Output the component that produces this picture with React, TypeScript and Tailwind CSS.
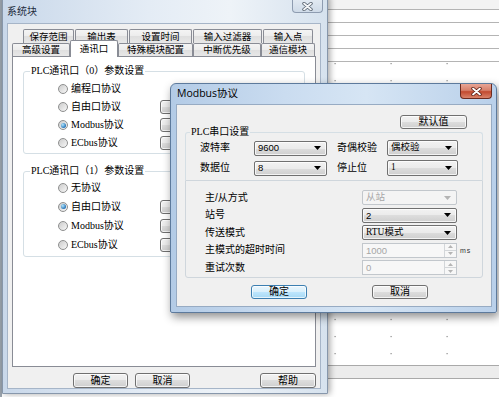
import type { ReactNode } from "react";

const face = "font-['Liberation_Sans','Noto_Sans_CJK_SC',sans-serif]";
const serif = "font-['Liberation_Serif','Noto_Sans_CJK_SC',serif]";
const btnSkin =
  "border-[#707070] bg-[linear-gradient(#f2f2f2,#ebebeb_50%,#dddddd_50%,#cfcfcf)] shadow-[inset_0_0_0_1px_rgba(255,255,255,0.75)]";

function Btn({
  children,
  className = "",
  primary = false,
}: {
  children?: ReactNode;
  className?: string;
  primary?: boolean;
}) {
  const skin = primary
    ? "border-[#3c7fb1] bg-[linear-gradient(#eaf6fd,#d9f0fc_50%,#bee6fd_50%,#a7d9f5)] shadow-[inset_0_0_0_1px_rgba(255,255,255,0.7)]"
    : btnSkin;
  return (
    <div
      className={`flex shrink-0 items-center justify-center rounded-[3px] border text-[10px] leading-none text-black ${skin} ${className}`}
    >
      {children}
    </div>
  );
}

function Radio({ on = false }: { on?: boolean }) {
  return (
    <span className="flex h-[10px] w-[10px] shrink-0 items-center justify-center rounded-full border border-[#8e8f8f] bg-[linear-gradient(135deg,#cbcbcb,#f7f7f7)]">
      {on && (
        <span className="h-[5px] w-[5px] rounded-full bg-[radial-gradient(circle_at_35%_35%,#b4e8ff,#1d6cb2_75%)]" />
      )}
    </span>
  );
}

function Arrow({ grey = false }: { grey?: boolean }) {
  return (
    <svg width="7" height="4" viewBox="0 0 7 4" className="shrink-0">
      <path d="M0 0h7L3.5 4z" fill={grey ? "#b4b4b4" : "#000"} />
    </svg>
  );
}

function Combo({
  value,
  className = "",
  disabled = false,
  latin = false,
}: {
  value: string;
  className?: string;
  disabled?: boolean;
  latin?: boolean;
}) {
  const skin = disabled
    ? "border-[#c2c7cc] bg-[#f4f4f4] text-[#a6a6a6]"
    : `${btnSkin} text-black`;
  return (
    <div
      className={`flex h-[15px] shrink-0 items-center justify-between rounded-[2px] border pl-[3px] pr-[5px] text-[9.5px] leading-none ${skin} ${
        latin ? face : serif
      } ${className}`}
    >
      <span>{value}</span>
      <Arrow grey={disabled} />
    </div>
  );
}

function Spin({ value }: { value: string }) {
  return (
    <div className="flex h-[15px] w-[95px] shrink-0 items-stretch border border-[#c2c7cc] bg-[#f7f7f7] text-[9.5px] leading-none text-[#a6a6a6]">
      <span className="flex flex-1 items-center pl-[3px]">{value}</span>
      <div className="flex w-[12px] flex-col border-l border-[#d3d6d9]">
        <div className="flex flex-1 items-center justify-center border-b border-[#d3d6d9]">
          <svg width="5" height="3" viewBox="0 0 5 3">
            <path d="M0 3h5L2.5 0z" fill="#b4b4b4" />
          </svg>
        </div>
        <div className="flex flex-1 items-center justify-center">
          <svg width="5" height="3" viewBox="0 0 5 3">
            <path d="M0 0h5L2.5 3z" fill="#b4b4b4" />
          </svg>
        </div>
      </div>
    </div>
  );
}

function CloseX({ inner, outline }: { inner: string; outline: string }) {
  return (
    <svg width="11" height="9" viewBox="0 0 11 9">
      <path d="M2 1.5l7 6M9 1.5l-7 6" stroke={outline} strokeWidth="3.4" strokeLinecap="round" />
      <path d="M2 1.5l7 6M9 1.5l-7 6" stroke={inner} strokeWidth="1.8" strokeLinecap="round" />
    </svg>
  );
}

const topTabs = [
  { t: "保存范围", w: "w-[51px]" },
  { t: "输出表", w: "w-[53px]" },
  { t: "设置时间", w: "w-[63px]" },
  { t: "输入过滤器", w: "w-[69px]" },
  { t: "输入点", w: "w-[50px]" },
];

const lowTabs = [
  { t: "高级设置", w: "w-[58px]" },
  { t: "通讯口", w: "w-[48px]", on: true },
  { t: "特殊模块配置", w: "w-[75px]" },
  { t: "中断优先级", w: "w-[68px]" },
  { t: "通信模块", w: "w-[54px]" },
];

const tabSkin =
  "border border-b-0 border-[#898c95] rounded-t-[2px] bg-[linear-gradient(#f4f4f4,#ececec_50%,#dfdfdf_50%,#e8e8e8)]";

function PortGroup({
  title,
  items,
  rowH,
  pt,
  pb,
  className = "",
}: {
  title: string;
  items: { label: string; on?: boolean; btn?: boolean }[];
  rowH: string;
  pt: string;
  pb: string;
  className?: string;
}) {
  return (
    <fieldset className={`rounded-[3px] border border-[#d5dfe5] ${pt} ${pb} ${className}`}>
      <legend className={`ml-[6px] px-[1px] text-[10px] leading-[12px] ${serif}`}>{title}</legend>
      {items.map((it) => (
        <div key={it.label} className={`flex items-center pl-[34px] ${rowH}`}>
          <Radio on={it.on} />
          <span className={`ml-[3px] w-[89px] text-[10px] leading-none ${serif}`}>{it.label}</span>
          {it.btn && <Btn className="h-[14px] w-[60px]" />}
        </div>
      ))}
    </fieldset>
  );
}

function SystemBlock() {
  return (
    <div className="absolute left-[2px] top-[-6px] flex h-[400px] w-[326px] flex-col rounded-t-[6px] border border-[#8797ab] bg-[linear-gradient(90deg,#c9d8ea,#e4ecf5_45%,#eef3f8_70%,#d6e2ee)] shadow-[2px_0_6px_rgba(0,0,0,0.35)]">
      <div className="flex h-[28px] shrink-0 items-start">
        <span className="ml-[4px] mt-[11px] text-[10px] leading-[12px] text-[#1e2b3c]">系统块</span>
        <div className="ml-auto mr-[4px] flex h-[18px] w-[31px] items-center justify-center rounded-b-[4px] border border-t-0 border-[#8e9cb0] bg-[linear-gradient(#e9eff6,#cfdbe8)] pt-[5px]">
          <CloseX inner="#f4f6f8" outline="#55606e" />
        </div>
      </div>
      <div className="mb-[5px] ml-[4px] mr-[6px] flex flex-1 flex-col border border-[#a6b5c8] bg-[#f0f0f0] px-[4px] pt-[5px]">
        <div className="flex w-[304px] flex-col">
          <div className="flex h-[14px] gap-px pl-[11px]">
            {topTabs.map((t) => (
              <div
                key={t.t}
                className={`flex items-center justify-center text-[9.5px] leading-none ${tabSkin} ${t.w}`}
              >
                {t.t}
              </div>
            ))}
          </div>
          <div className="relative z-10 flex h-[13px] items-end">
            {lowTabs.map((t) =>
              t.on ? (
                <div
                  key={t.t}
                  className={`-mb-px flex h-[17px] items-center justify-center rounded-t-[2px] border border-b-0 border-[#898c95] bg-white pb-[1px] text-[9.5px] leading-none ${t.w}`}
                >
                  {t.t}
                </div>
              ) : (
                <div
                  key={t.t}
                  className={`flex h-[13px] items-center justify-center text-[9.5px] leading-none ${tabSkin} ${t.w}`}
                >
                  {t.t}
                </div>
              )
            )}
          </div>
          <div className="flex h-[311px] flex-col border border-[#898c95] bg-white px-[10px] pt-[8px]">
            <PortGroup
              title="PLC通讯口（0）参数设置"
              rowH="h-[18px]"
              pt="pt-[3px]"
              pb="pb-[1px]"
              items={[
                { label: "编程口协议" },
                { label: "自由口协议", btn: true },
                { label: "Modbus协议", on: true, btn: true },
                { label: "ECbus协议", btn: true },
              ]}
            />
            <PortGroup
              title="PLC通讯口（1）参数设置"
              rowH="h-[19px]"
              pt="pt-[1px]"
              pb="pb-[2px]"
              className="mt-[11px]"
              items={[
                { label: "无协议" },
                { label: "自由口协议", on: true, btn: true },
                { label: "Modbus协议", btn: true },
                { label: "ECbus协议", btn: true },
              ]}
            />
          </div>
        </div>
        <div className="mt-[6px] flex gap-[7px] pl-[61px]">
          <Btn className="h-[15px] w-[55px]">确定</Btn>
          <Btn className="h-[15px] w-[55px]">取消</Btn>
          <Btn className="ml-auto h-[15px] w-[56px]">帮助</Btn>
        </div>
      </div>
    </div>
  );
}

function FieldRow({ label, children }: { label: string; children: ReactNode }) {
  return (
    <div className="flex h-[17.5px] items-center pl-[19px]">
      <span className="w-[157px] text-[10px] leading-none">{label}</span>
      {children}
    </div>
  );
}

function ModbusDialog() {
  return (
    <div className="absolute left-[170px] top-[83px] flex h-[230px] w-[327px] flex-col rounded-t-[6px] rounded-b-[2px] border border-[#5d7a9c] bg-[linear-gradient(90deg,#b3cbe6,#cadcf0_35%,#d6e5f4_60%,#b9d0ea)] shadow-[2px_4px_10px_rgba(0,0,0,0.45)]">
      <div className="flex h-[20px] shrink-0 items-start">
        <span className="ml-[6px] mt-[3px] font-['Open_Sans','Noto_Sans_CJK_SC',sans-serif] text-[10.5px] leading-[12px] text-black">
          Modbus协议
        </span>
        <div className="ml-auto mr-[4px] flex h-[15px] w-[32px] items-center justify-center rounded-b-[4px] border border-t-0 border-[#6b2a1f] bg-[linear-gradient(#e8a595,#d7806b_45%,#c24a2f_55%,#d9836a)]">
          <CloseX inner="#ffffff" outline="#5b1d12" />
        </div>
      </div>
      <div className="ml-[5px] mr-[4px] flex h-[203px] flex-col border border-[#97abc3] bg-[#f0f0f0]">
        <div className="mt-[10px] flex h-[14px] pl-[223px]">
          <Btn className="h-[14px] w-[67px]">默认值</Btn>
        </div>
        <fieldset className="ml-[8px] mt-[-2px] w-[298px] rounded-t-[3px] border border-b-0 border-[#d5dfe5] pt-[1px]">
          <legend className={`ml-[4px] px-[1px] text-[10px] leading-[10px] ${serif}`}>PLC串口设置</legend>
          <div className="flex h-[20px] items-center pl-[14px]">
            <span className="w-[54px] text-[10px] leading-none">波特率</span>
            <Combo value="9600" latin className="w-[73px]" />
            <span className="ml-[10px] w-[50px] text-[10px] leading-none">奇偶校验</span>
            <Combo value="偶校验" className="h-[16px] w-[71px]" />
          </div>
          <div className="flex h-[20px] items-center pl-[14px]">
            <span className="w-[54px] text-[10px] leading-none">数据位</span>
            <Combo value="8" latin className="w-[73px]" />
            <span className="ml-[10px] w-[50px] text-[10px] leading-none">停止位</span>
            <Combo value="1" className="h-[16px] w-[71px]" />
          </div>
          <div className="h-[2px]" />
        </fieldset>
        <div className="ml-[8px] flex h-[98px] w-[298px] flex-col rounded-b-[3px] border border-[#cfd6dc] pt-[8px]">
          <FieldRow label="主/从方式">
            <Combo value="从站" disabled className="w-[95px]" />
          </FieldRow>
          <FieldRow label="站号">
            <Combo value="2" latin className="w-[95px]" />
          </FieldRow>
          <FieldRow label="传送模式">
            <Combo value="RTU模式" className="w-[95px]" />
          </FieldRow>
          <FieldRow label="主模式的超时时间">
            <Spin value="1000" />
            <span className="ml-[3px] text-[7px] leading-none tracking-[1px] text-[#333]">ms</span>
          </FieldRow>
          <FieldRow label="重试次数">
            <Spin value="0" />
          </FieldRow>
        </div>
        <div className="mt-[7px] flex pl-[74px]">
          <Btn primary className="h-[14px] w-[56px]">
            确定
          </Btn>
          <Btn className="ml-[65px] h-[14px] w-[56px]">取消</Btn>
        </div>
      </div>
    </div>
  );
}

function Canvas() {
  const rows = Array.from({ length: 18 }, (_, i) => 1 + i * 17.06);
  const cols = [335, 391, 447];
  return (
    <div className="flex h-full w-full flex-col border-l-[2px] border-[#9aa3ad] bg-white">
      <div className="h-[10px] border-b border-[#b4b4b4] bg-[#f3f3f3]" />
      <div className="h-[13px] border-b border-[#b4b4b4]" />
      <div className="h-[13px] border-b border-[#b4b4b4]" />
      <div className="h-[13px] border-b border-[#b4b4b4]" />
      <div className="h-[13px] border-b border-[#b4b4b4]" />
      <svg width="497" height="303" className="shrink-0">
        {rows.map((y) =>
          cols.map((x) => (
            <rect key={`${x}-${y}`} x={x - 2.5} y={y} width="1.2" height="1.2" fill="#8c8c8c" />
          ))
        )}
      </svg>
      <div className="h-[14px] border-y border-[#a9a9a9] bg-[#ececec]" />
      <div className="flex-1 bg-white" />
    </div>
  );
}

export default function App() {
  return (
    <div className={`relative h-[397px] w-[499px] overflow-hidden bg-white text-black ${face}`}>
      <Canvas />
      <SystemBlock />
      <ModbusDialog />
    </div>
  );
}
